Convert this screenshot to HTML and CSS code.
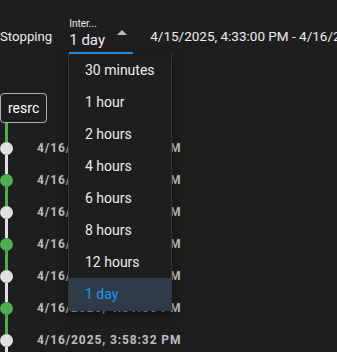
FILE: index.html
```html
<!DOCTYPE html>
<html lang="en">

<head>
    <meta charset="UTF-8" />
    <meta name="viewport" content="width=device-width, initial-scale=1.0" />
    <title>Run timeline</title>
    <link rel="stylesheet" href="styles.css">
</head>

<body>
    <div class="toolbar">
        <span class="status">Stopping</span>
        <div class="select open">
            <div class="select-text">
                <span class="select-label">Inter...</span>
                <span class="select-value">1 day</span>
            </div>
            <span class="arrow"></span>
        </div>
        <span class="range">4/15/2025, 4:33:00 PM - 4/16/2025, 4:33:00 PM</span>
    </div>

    <div class="timeline">
        <div class="tag">resrc</div>
        <div class="link green"></div>

        <div class="row">
            <div class="rail"><span class="seg green"></span><span class="dot white"></span><span class="seg white"></span></div>
            <span class="time">4/16/2025, 4:31:04 PM</span>
        </div>
        <div class="row">
            <div class="rail"><span class="seg white"></span><span class="dot green"></span><span class="seg green"></span></div>
            <span class="time">4/16/2025, 4:24:40 PM</span>
        </div>
        <div class="row">
            <div class="rail"><span class="seg green"></span><span class="dot white"></span><span class="seg white"></span></div>
            <span class="time">4/16/2025, 4:18:12 PM</span>
        </div>
        <div class="row">
            <div class="rail"><span class="seg white"></span><span class="dot green"></span><span class="seg green"></span></div>
            <span class="time">4/16/2025, 4:11:48 PM</span>
        </div>
        <div class="row">
            <div class="rail"><span class="seg green"></span><span class="dot white"></span><span class="seg white"></span></div>
            <span class="time">4/16/2025, 4:05:20 PM</span>
        </div>
        <div class="row">
            <div class="rail"><span class="seg white"></span><span class="dot green"></span><span class="seg green"></span></div>
            <span class="time">4/16/2025, 4:01:56 PM</span>
        </div>
        <div class="row">
            <div class="rail"><span class="seg green"></span><span class="dot white"></span><span class="seg white"></span></div>
            <span class="time">4/16/2025, 3:58:32 PM</span>
        </div>
    </div>

    <ul class="menu">
        <li>30 minutes</li>
        <li>1 hour</li>
        <li>2 hours</li>
        <li>4 hours</li>
        <li>6 hours</li>
        <li>8 hours</li>
        <li>12 hours</li>
        <li class="selected">1 day</li>
    </ul>
</body>

</html>
```

FILE: styles.css
```css
:root {
    --background: #1e1e1e;
    --text: #ececec;
    --muted: #bdbdbd;
    --primary: #2196f3;
    --green: #4caf50;
    --white: #e0e0e0;
}

* {
    box-sizing: border-box;
}

body {
    margin: 0;
    height: 352px;
    overflow: hidden;
    font-family: Roboto, 'Noto Sans', sans-serif;
    background: var(--background);
    color: var(--text);
    position: relative;
}

.toolbar {
    display: flex;
    align-items: center;
    gap: 17px;
    margin-top: 18px;
    white-space: nowrap;
    font-size: 13.5px;
}

.toolbar > * {
    flex: none;
}

.status {
    font-size: 13.2px;
}

.select {
    display: flex;
    align-items: center;
    justify-content: space-between;
    width: 64px;
    padding-bottom: 2px;
    border-bottom: 2px solid var(--primary);
}

.select-text {
    display: flex;
    flex-direction: column;
}

.select-label {
    font-size: 10px;
    line-height: 12px;
}

.select-value {
    font-size: 15px;
    line-height: 20px;
}

.arrow {
    width: 0;
    height: 0;
    margin: 0 6px 4px 0;
    border-left: 5px solid transparent;
    border-right: 5px solid transparent;
    border-bottom: 5px solid var(--muted);
}

.timeline {
    margin-top: 39px;
}

.tag {
    display: inline-block;
    height: 30px;
    padding: 0 7px;
    line-height: 28px;
    font-size: 14px;
    color: #fff;
    border: 1px solid #b0b0b0;
    border-radius: 4px;
}

.link {
    width: 3px;
    height: 9px;
    margin-left: 5px;
}

.row {
    display: flex;
    align-items: center;
    gap: 24px;
    height: 32px;
}

.rail {
    display: flex;
    flex-direction: column;
    align-items: center;
    width: 13px;
    height: 100%;
}

.seg {
    width: 3px;
    flex: 1;
}

.dot {
    width: 13px;
    height: 13px;
    border-radius: 50%;
}

.green {
    background: var(--green);
}

.white {
    background: var(--white);
}

.time {
    font-size: 12px;
    font-weight: bold;
    letter-spacing: 0.9px;
    color: var(--muted);
    white-space: nowrap;
}

.menu {
    position: absolute;
    left: 68px;
    top: 54px;
    width: 104px;
    margin: 0;
    padding: 0;
    list-style: none;
    background: var(--background);
    border: 1px solid #363636;
    border-top: none;
    box-shadow: 0 4px 8px rgba(0, 0, 0, 0.5);
}

.menu li {
    height: 32px;
    line-height: 32px;
    padding-left: 16px;
    font-size: 14px;
    color: var(--text);
}

.menu li.selected {
    background: #2e3b48;
    color: var(--primary);
}
```
